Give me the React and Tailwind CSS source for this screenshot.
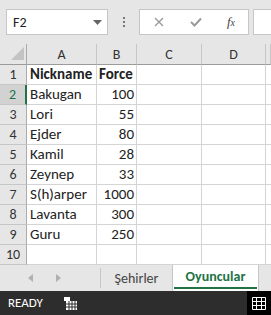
const rows = [
  ["Nickname", "Force", true],
  ["Bakugan", "100"],
  ["Lori", "55"],
  ["Ejder", "80"],
  ["Kamil", "28"],
  ["Zeynep", "33"],
  ["S(h)arper", "1000"],
  ["Lavanta", "300"],
  ["Guru", "250"],
  ["", ""],
];

const font = { fontFamily: "Carlito, 'Liberation Sans', Arial, sans-serif" };

const App = () => {
  return (
    <div className="w-[271px] h-[315px] overflow-hidden bg-white flex flex-col text-[#222]" style={font}>
      {/* formula bar */}
      <div className="h-[44px] bg-[#e6e6e6] flex items-start pt-[9px] pl-[6px] shrink-0">
        <div className="w-[102px] h-[26px] bg-white border border-[#c6c6c6] flex items-center justify-between pl-[6px] pr-[5px]">
          <span className="text-[14px] text-[#222]">F2</span>
          <svg width="9" height="5" viewBox="0 0 9 5"><path d="M0 0h9L4.5 5z" fill="#666" /></svg>
        </div>
        <div className="w-[31px] h-[26px] flex flex-col items-center justify-center gap-[2px]">
          <span className="w-[2px] h-[2px] bg-[#777]" />
          <span className="w-[2px] h-[2px] bg-[#777]" />
          <span className="w-[2px] h-[2px] bg-[#777]" />
        </div>
        <div className="w-[110px] h-[26px] bg-white border border-[#c6c6c6] flex items-center">
          <div className="w-[38px] flex justify-center">
            <svg width="10" height="10" viewBox="0 0 10 10"><path d="M1 1l8 8M9 1l-8 8" stroke="#9a9a9a" strokeWidth="1.4" /></svg>
          </div>
          <div className="w-[36px] flex justify-center">
            <svg width="12" height="10" viewBox="0 0 12 10"><path d="M1 5l3.5 3.5L11 1.5" stroke="#9a9a9a" strokeWidth="2" fill="none" /></svg>
          </div>
          <div className="w-[34px] flex justify-center">
            <span className="italic text-[13px] text-[#444]" style={{ fontFamily: "'Liberation Serif', serif" }}>f<span className="text-[10px]">x</span></span>
          </div>
        </div>
        <div className="ml-[4px] flex-1 h-[26px] bg-white border border-[#c6c6c6] border-r-0" />
      </div>

      {/* sheet */}
      <div className="grid grid-cols-[27px_70px_40px_65px_64px_1fr] shrink-0">
        <div className="h-[21px] bg-[#e6e6e6] border-r border-b border-[#ababab] border-b-[#9b9b9b] flex items-end justify-end pr-[2px] pb-[4px]">
          <svg width="13" height="13" viewBox="0 0 13 13"><path d="M13 0V13H0z" fill="#c3c3c3" /></svg>
        </div>
        {["A", "B", "C", "D", ""].map((c, i) => (
          <div key={i} className="h-[21px] bg-[#e6e6e6] border-r border-b border-[#c6c6c6] border-b-[#9b9b9b] flex items-center justify-center text-[14px] text-[#333]">
            {c}
          </div>
        ))}
        {rows.map((r, i) => (
          <Row key={i} n={i + 1} r={r} />
        ))}
      </div>

      {/* tabs */}
      <div className="h-[26px] bg-[#e6e6e6] flex items-stretch shrink-0">
        <div className="w-[101px] flex items-center border-r border-[#c6c6c6] my-[3px]">
          <svg className="ml-[28px]" width="5" height="8" viewBox="0 0 5 8"><path d="M5 0v8L0 4z" fill="#b0b0b0" /></svg>
          <svg className="ml-[23px]" width="5" height="8" viewBox="0 0 5 8"><path d="M0 0v8l5-4z" fill="#b0b0b0" /></svg>
        </div>
        <div className="w-[71px] flex items-center justify-center text-[14px] text-[#444]">Şehirler</div>
        <div className="w-[87px] bg-white border-x border-[#c6c6c6] flex flex-col">
          <div className="flex-1 flex items-center justify-center text-[14px] font-bold text-[#217346] pt-[1px]">Oyuncular</div>
          <div className="h-[2px] bg-[#217346] mx-[1px] mb-[2px]" />
        </div>
      </div>

      {/* status */}
      <div className="flex-1 bg-[#2d2d2d] flex items-center">
        <span className="ml-[8px] text-[13px] text-white">READY</span>
        <svg className="ml-[21px]" width="13" height="13" viewBox="0 0 13 13">
          <rect x="0" y="0" width="6" height="4" fill="#fff" />
          <rect x="2" y="4" width="11" height="9" fill="#fff" />
          <path d="M2 7h11M2 10h11M5 4v9M8 4v9M11 4v9" stroke="#2d2d2d" strokeWidth="1" />
        </svg>
        <div className="ml-auto w-[24px] h-full bg-black flex items-center justify-center">
          <svg width="14" height="13" viewBox="0 0 14 13">
            <path d="M0.5 0.5h13v12h-13zM0.5 4.5h13M0.5 8.5h13M4.5 0.5v12M9.5 0.5v12" stroke="#fff" strokeWidth="1" fill="none" />
          </svg>
        </div>
      </div>
    </div>
  );
};

const Row = ({ n, r }) => {
  const [a, b, bold] = r;
  const sel = n === 2;
  return (
    <>
      <div
        className={
          "h-[20px] border-b border-[#c6c6c6] flex items-center justify-center text-[14px] " +
          (sel ? "bg-[#d2d2d2] text-[#217346] border-r-2 border-r-[#217346]" : "bg-[#e6e6e6] text-[#333] border-r border-r-[#ababab]")
        }
      >
        {n}
      </div>
      <div className={"h-[20px] border-r border-b border-[#d4d4d4] flex items-center pl-[3px] text-[15px] " + (bold ? "font-bold" : "")}>
        {a}
      </div>
      <div className={"h-[20px] border-r border-b border-[#d4d4d4] flex items-center text-[15px] " + (bold ? "font-bold pl-[2px]" : "justify-end pr-[2px]")}>
        {b}
      </div>
      <div className="h-[20px] border-r border-b border-[#d4d4d4]" />
      <div className="h-[20px] border-r border-b border-[#d4d4d4]" />
      <div className="h-[20px] border-b border-[#d4d4d4]" />
    </>
  );
};

export default App;
